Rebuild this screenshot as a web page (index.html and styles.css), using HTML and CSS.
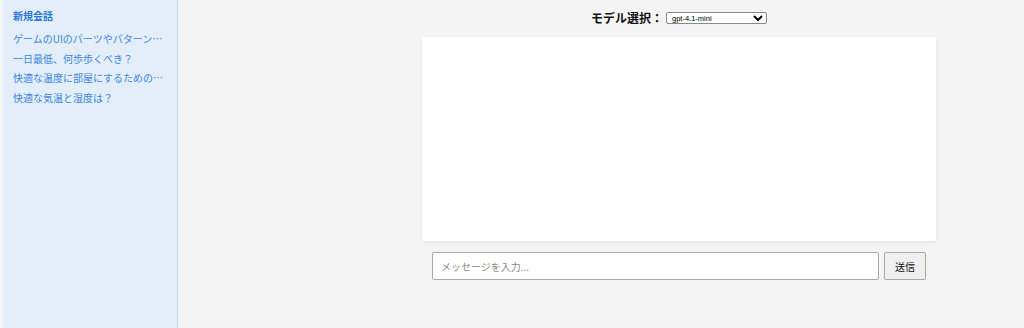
FILE: index.html
```html
<!DOCTYPE html>
<html lang="ja">
  <head>
    <meta charset="UTF-8" />
    <meta name="viewport" content="width=device-width, initial-scale=1.0" />
    <title>チャット</title>
    <link rel="stylesheet" href="styles.css">
  </head>
  <body>
    <div class="app">
      <div class="edge"></div>
      <aside class="sidebar">
        <div class="newChat">新規会話</div>
        <ul class="history">
          <li>ゲームのUIのパーツやパターン…</li>
          <li>一日最低、何歩歩くべき？</li>
          <li>快適な温度に部屋にするための…</li>
          <li>快適な気温と湿度は？</li>
        </ul>
      </aside>
      <main class="main">
        <div class="column">
          <div class="modelRow">
            <label class="modelLabel">モデル選択：</label>
            <select class="modelSelect">
              <option>gpt-4.1-mini</option>
              <option>gpt-4.1</option>
              <option>gpt-4o</option>
            </select>
          </div>
          <div class="chatBox"></div>
          <div class="inputRow">
            <input class="messageInput" type="text" placeholder="メッセージを入力..." />
            <button class="sendBtn">送信</button>
          </div>
        </div>
      </main>
    </div>
  </body>
</html>
```

FILE: styles.css
```css
* {
  padding: 0;
  margin: 0;
  box-sizing: border-box;
  list-style: none;
}
body {
  font-family: "Noto Sans CJK JP", "Liberation Sans", sans-serif;
  background-color: #f4f4f4;
  height: 328px;
  overflow: hidden;
}
.app {
  display: flex;
  height: 328px;
}
.edge {
  width: 3px;
  background-color: #f4f4f4;
}
.sidebar {
  width: 175px;
  background-color: #e3eefa;
  border-right: 1px solid #c9d7e6;
  padding: 8px 10px;
}
.newChat {
  color: #2a78d6;
  font-weight: bold;
  font-size: 10px;
  line-height: 16px;
  margin-bottom: 5px;
}
.history li {
  color: #3a86e0;
  font-size: 10px;
  line-height: 19.7px;
  white-space: nowrap;
}
.main {
  flex: 1;
}
.column {
  width: 514px;
  margin-left: 244px;
}
.modelRow {
  display: flex;
  justify-content: center;
  align-items: center;
  gap: 3px;
  height: 37px;
  padding-bottom: 2px;
}
.modelLabel {
  font-weight: bold;
  font-size: 12px;
  color: #111;
}
.modelSelect {
  width: 101px;
  height: 12px;
  font-size: 7.5px;
  font-family: "Liberation Sans", sans-serif;
  border: 1px solid #8a8a8a;
  border-radius: 2px;
  background-color: #fff;
  padding: 0 1px;
}
.chatBox {
  height: 204px;
  background-color: #fff;
  box-shadow: 0 1px 3px rgba(0, 0, 0, 0.08);
}
.inputRow {
  display: flex;
  gap: 5px;
  padding: 11px 10px 0 10px;
}
.messageInput {
  flex: 1;
  height: 28px;
  border: 1px solid #a9a9a9;
  border-radius: 2px;
  padding: 0 8px;
  font-size: 10px;
  font-family: "Noto Sans CJK JP", sans-serif;
  background-color: #fff;
}
.messageInput::placeholder {
  color: #8a8a8a;
}
.sendBtn {
  width: 42px;
  height: 28px;
  font-size: 10px;
  font-family: "Noto Sans CJK JP", sans-serif;
  background-color: #efefef;
  border: 1px solid #a9a9a9;
  border-radius: 2px;
  color: #111;
  cursor: pointer;
}
```
